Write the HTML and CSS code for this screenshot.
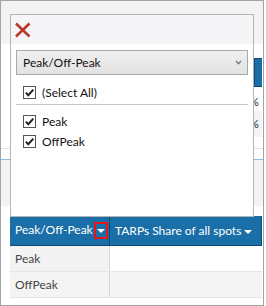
FILE: index.html
```html
<!DOCTYPE html>
<html lang="en">
<head>
  <meta charset="UTF-8">
  <title>Peak/Off-Peak filter</title>
  <link rel="stylesheet" href="styles.css">
</head>
<body>
  <div class="frame">
    <div class="backdrop">
      <div class="top-band"></div>
      <div class="tools">
        <div class="side">
          <div class="side-btn"></div>
          <div class="side-pct">%</div>
          <div class="side-row">%</div>
        </div>
      </div>
      <div class="filters"></div>
      <table class="grid">
        <thead>
          <tr>
            <th class="col-first">Peak/Off-Peak<span class="filter-btn"><span class="caret"></span></span></th>
            <th>TARPs Share of all spots <span class="caret"></span></th>
          </tr>
        </thead>
        <tbody>
          <tr>
            <td class="col-first">Peak</td>
            <td></td>
          </tr>
          <tr class="alt">
            <td class="col-first">OffPeak</td>
            <td></td>
          </tr>
        </tbody>
      </table>
    </div>

    <!-- filter popup -->
    <div class="popup">
      <div class="popup-head">
        <svg class="close" width="18" height="16" viewBox="0 0 18 16">
          <path d="M2 1.5 L15.5 14.5 M15.5 1.5 L2 14.5" stroke="#b93a2c" stroke-width="2.6" fill="none"/>
        </svg>
      </div>
      <div class="select">
        <span>Peak/Off-Peak</span>
        <svg width="7" height="5" viewBox="0 0 7 5">
          <path d="M1 1 L3.5 3.8 L6 1" stroke="#777" stroke-width="1.3" fill="none"/>
        </svg>
      </div>
      <label class="check all">
        <span class="box"><svg width="11" height="11" viewBox="0 0 11 11"><path d="M1.8 5.6 L4.3 8.2 L9.3 2.6" stroke="#222" stroke-width="2" fill="none"/></svg></span>
        (Select All)
      </label>
      <div class="sep"></div>
      <label class="check">
        <span class="box"><svg width="11" height="11" viewBox="0 0 11 11"><path d="M1.8 5.6 L4.3 8.2 L9.3 2.6" stroke="#222" stroke-width="2" fill="none"/></svg></span>
        Peak
      </label>
      <label class="check">
        <span class="box"><svg width="11" height="11" viewBox="0 0 11 11"><path d="M1.8 5.6 L4.3 8.2 L9.3 2.6" stroke="#222" stroke-width="2" fill="none"/></svg></span>
        OffPeak
      </label>
    </div>
  </div>
</body>
</html>
```

FILE: styles.css
```css
body {
  margin: 0;
  font-family: Lato, "Open Sans", sans-serif;
  font-size: 12px;
  background-color: white;
}
.frame {
  position: relative;
  width: 264px;
  height: 306px;
  border: 1px solid #a3a3a3;
  box-sizing: border-box;
  overflow: hidden;
  background-color: white;
}
.backdrop {
  display: flex;
  flex-direction: column;
}
.top-band {
  height: 43px;
  background-color: #f3f3f5;
}
.tools {
  height: 104px;
  display: flex;
  justify-content: flex-end;
  border-bottom: 1px solid #e2e2e2;
}
.side {
  width: 8px;
  margin-right: 1px;
  padding-top: 14px;
  color: #222;
  font-size: 11px;
  text-align: left;
  text-indent: -4px;
  overflow: hidden;
}
.side-btn {
  height: 29px;
  box-sizing: border-box;
  background-color: #1b6fa8; /* blue */
  border: 1px solid #0e4a75;
  border-right: none;
}
.side-pct {
  margin-top: 8px;
  height: 16px;
}
.side-row {
  height: 26px;
  line-height: 26px;
  background-color: #f3f3f5;
}
.filters {
  margin-top: 10px;
  height: 46px;
  border-top: 1px solid #8cc0ea;
  background-color: #f3f3f5;
}
.grid {
  margin: 10px 0 0 9px;
  width: 252px;
  border-collapse: collapse;
  color: #444;
}
.grid th {
  height: 29px;
  padding: 0 0 0 5px;
  background-color: #1b6fa8;
  color: white;
  font-weight: normal;
  text-align: left;
  white-space: nowrap;
  border-bottom: 1px solid #0e4a75;
  border-right: 1px solid #0e4a75;
}
.grid td {
  height: 25px;
  padding: 0 0 0 5px;
  border-bottom: 1px solid #e6e6e6;
}
.grid .col-first {
  width: 94px;
}
.grid td.col-first {
  background-color: #f3f3f3;
  border-right: 1px solid #d6d6d6;
}
.grid tr.alt td {
  background-color: #f4f4f4;
}
.filter-btn {
  display: inline-flex;
  align-items: center;
  justify-content: center;
  width: 10px;
  height: 13px;
  margin-left: 1px;
  vertical-align: middle;
  border: 2px solid #e8141c;
}
.caret {
  display: inline-block;
  width: 0;
  height: 0;
  vertical-align: middle;
  border-left: 4px solid transparent;
  border-right: 4px solid transparent;
  border-top: 4px solid white;
}
.popup {
  position: absolute;
  left: 9px;
  top: 13px;
  width: 244px;
  height: 203px;
  box-sizing: border-box;
  border: 1px solid #b4b4b4;
  background-color: white;
  color: #111;
}
.popup-head {
  height: 29px;
  padding: 7px 0 0 3px;
  box-sizing: border-box;
  background-color: #f5f5f7;
}
.close {
  display: block;
}
.select {
  margin: 6px 5px 0 5px;
  height: 25px;
  box-sizing: border-box;
  padding: 0 5px 0 6px;
  display: flex;
  align-items: center;
  justify-content: space-between;
  border: 1px solid #a9a9a9;
  background: linear-gradient(#f0f0f0, #e2e2e2);
}
.check {
  display: flex;
  align-items: center;
  gap: 6px;
  height: 13px;
  margin: 7px 0 0 12px;
}
.check.all {
  margin-top: 11px;
}
.box {
  width: 13px;
  height: 13px;
  box-sizing: border-box;
  border: 1px solid #555;
  display: flex;
  align-items: center;
  justify-content: center;
}
.sep {
  height: 1px;
  margin: 5px 5px 10px 5px;
  background-color: #c6c6c6;
}
```
